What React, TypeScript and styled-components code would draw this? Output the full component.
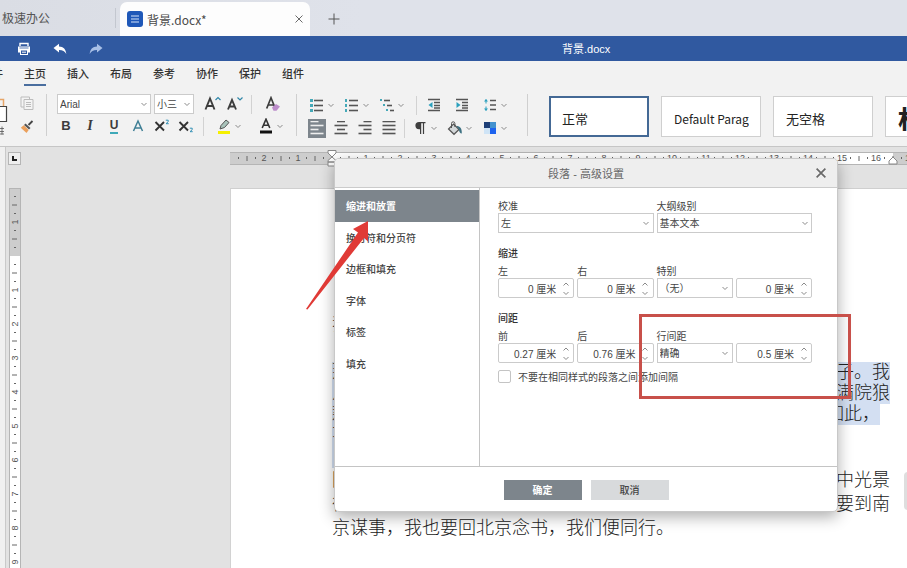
import React from "react";
import styled, { createGlobalStyle, css } from "styled-components";

const cjk = '"Noto Sans CJK SC", sans-serif';
const ui = '"Liberation Sans", "Noto Sans CJK SC", sans-serif';

const GlobalStyle = createGlobalStyle`
  *, *::before, *::after { box-sizing: border-box; }
  body { margin: 0; background: #e2e2e2; font-family: ${ui}; color: #333; }
  button, input, select { font: inherit; color: inherit; margin: 0; }
  p, h1, h2 { margin: 0; }
`;

const App_ = styled.div`
  position: relative;
  display: flex;
  flex-direction: column;
  height: 100vh;
  overflow: hidden;
`;

/* ---------- window tabs ---------- */

const WindowTabs = styled.header`
  display: flex;
  align-items: flex-end;
  flex: none;
  height: 36px;
  padding-left: 2px;
  background: linear-gradient(90deg, #dadde4, #dfe2ea 40%);
  font-family: ${cjk};
  font-size: 12px;
`;

const HomeTab = styled.button`
  width: 114px;
  height: 20px;
  margin-bottom: 8px;
  padding: 0;
  border: 0;
  border-right: 1px solid #c3c7cf;
  background: none;
  color: #555;
  text-align: left;
  line-height: 20px;
`;

const FileTab = styled.div`
  display: flex;
  align-items: center;
  width: 190px;
  height: 34px;
  margin-left: 4px;
  padding: 0 7px;
  gap: 4px;
  border-radius: 7px 7px 0 0;
  background: #fdfdfd;
  color: #4a4a4a;
`;

const FileName = styled.span`
  flex: 1;
`;

const PlainButton = styled.button`
  display: flex;
  align-items: center;
  justify-content: center;
  padding: 0;
  border: 0;
  background: none;
  color: #555;
`;

const NewTabButton = styled(PlainButton)`
  width: 48px;
  height: 34px;
`;

/* ---------- title bar ---------- */

const TitleBar = styled.div`
  display: grid;
  grid-template-columns: 562px 1fr;
  align-items: center;
  flex: none;
  height: 25px;
  background: #3059a0;
  color: #fff;
`;

const QuickActions = styled.div`
  display: flex;
  gap: 20px;
  padding-left: 16px;
`;

const QuickButton = styled(PlainButton)<{ $dim?: boolean }>`
  width: 16px;
  height: 16px;
  color: ${(p) => (p.$dim ? "#a9c0e6" : "#fff")};
`;

const DocTitle = styled.h1`
  font-family: "Liberation Sans", ${cjk};
  font-size: 11px;
  font-weight: 400;
  line-height: 24px;
`;

/* ---------- ribbon ---------- */

const RibbonTabs = styled.nav`
  display: flex;
  flex: none;
  gap: 21px;
  height: 27px;
  background: #f2f2f2;
`;

const RibbonTab = styled.button<{ $active?: boolean; $cut?: boolean }>`
  flex: none;
  height: 25px;
  padding: 0;
  border: 0;
  border-bottom: 2px solid ${(p) => (p.$active ? "#4a6e9f" : "transparent")};
  margin-left: ${(p) => (p.$cut ? "-19px" : "0")};
  background: none;
  color: #333;
  font-family: ${cjk};
  font-size: 11px;
  font-weight: 500;
  line-height: 24px;
`;

const Ribbon = styled.div`
  display: flex;
  flex: none;
  height: 59px;
  padding-top: 6px;
  border-bottom: 1px solid #c6c6c6;
  background: #f2f2f2;
`;

const Group = styled.div<{ $width: number; $pad: number }>`
  display: flex;
  flex-direction: column;
  flex: none;
  gap: 1px;
  width: ${(p) => p.$width}px;
  height: 45px;
  padding-left: ${(p) => p.$pad}px;
`;

const Divided = styled(Group)`
  height: 42px;
  border-right: 1px solid #cfcfcf;
`;

const ToolRow = styled.div<{ $gap?: number; $pad?: number }>`
  display: flex;
  align-items: center;
  height: 22px;
  gap: ${(p) => p.$gap ?? 0}px;
  padding-left: ${(p) => p.$pad ?? 0}px;
`;

const Tool = styled(PlainButton)<{ $w: number; $on?: boolean }>`
  flex: none;
  width: ${(p) => p.$w}px;
  height: 19px;
  color: #444;
  background: ${(p) => (p.$on ? "#7d858c" : "none")};
`;

const Glyph = styled.span<{ $bold?: boolean; $italic?: boolean; $color?: string; $size?: number }>`
  font-size: ${(p) => p.$size ?? 14}px;
  line-height: 16px;
  font-weight: ${(p) => (p.$bold ? 700 : 400)};
  color: ${(p) => p.$color ?? "#3c3c3c"};
  ${(p) => p.$italic && css`font-family: "Liberation Serif", serif; font-style: italic;`}
`;

const Underlined = styled(Glyph)`
  height: 15px;
  font-size: 12px;
  line-height: 13px;
  border-bottom: 2px solid #3fa9b8;
`;

const ToolSeparator = styled.span<{ $gap: number }>`
  flex: none;
  width: 1px;
  height: 19px;
  margin: 0 ${(p) => p.$gap}px;
  background: #d2d2d2;
`;

const SelectFrame = styled.span<{ $w?: number }>`
  display: grid;
  grid-template-columns: 1fr 13px;
  align-items: center;
  flex: none;
  width: ${(p) => (p.$w ? `${p.$w}px` : "auto")};
  height: 20px;
  border: 1px solid #cbcbcb;
  background: #fff;
  color: #444;
  svg { grid-area: 1 / 2; justify-self: center; pointer-events: none; }
`;

const Select = styled.select`
  grid-area: 1 / 1 / 2 / 3;
  appearance: none;
  width: 100%;
  height: 18px;
  padding: 1px 0 0 2px;
  border: 0;
  background: none;
  font-size: 10px;
  line-height: 17px;
`;

const FontControls = styled.span`
  display: flex;
  gap: 3px;
  padding: 0 8px 0 3px;
`;

const StyleGallery = styled.div`
  display: flex;
  flex: 1;
  gap: 12px;
  min-width: 0;
  padding: 2px 0 0 21px;
  overflow: hidden;
`;

const StyleCard = styled.button<{ $active?: boolean }>`
  flex: none;
  width: 100px;
  height: 41px;
  padding: 5px 11px 0 12px;
  border: 1px solid #cfcfcf;
  ${(p) => p.$active && css`border: 2px solid #446995; padding: 4px 10px 0 11px;`}
  background: #fff;
  color: #222;
  font-family: ${cjk};
  text-align: left;
`;

const StyleName = styled.span<{ $size: number; $bold?: boolean }>`
  display: block;
  overflow: hidden;
  white-space: nowrap;
  font-size: ${(p) => p.$size}px;
  font-weight: ${(p) => (p.$bold ? 700 : 400)};
  line-height: ${(p) => (p.$bold ? 24 : 32)}px;
`;

/* ---------- workspace ---------- */

const Workspace = styled.main`
  display: grid;
  grid-template-columns: 6px 24px 200px 1fr;
  grid-template-rows: 41px 1fr;
  flex: 1;
  min-height: 0;
  background: #e2e2e2;
`;

const SideStrip = styled.div`
  grid-row: 1 / 3;
  border-right: 1px solid #c9c9c9;
  background: #f0f0f0;
`;

const TabStopCell = styled.div`
  padding: 5px 0 0 2px;
`;

const TabStopButton = styled(PlainButton)`
  width: 13px;
  height: 13px;
  border: 1px solid #b5b5b5;
  background: #efefef;
`;

const HRulerCell = styled.div`
  grid-column: 4;
  padding-top: 3px;
  overflow: hidden;
`;

const VRulerCell = styled.div`
  grid-column: 2;
  grid-row: 2;
  padding-left: 3px;
  overflow: hidden;
`;

const Page = styled.article`
  grid-column: 4;
  grid-row: 2;
  min-width: 0;
  padding: 123px 0 0 101px;
  overflow: hidden;
  border-left: 1px solid #d2d2d2;
  border-top: 1px solid #cfcfcf;
  background: #fff;
  color: #222;
  font-family: "Liberation Serif", "Noto Sans CJK SC", serif;
  font-size: 18px;
  font-weight: 300;
  white-space: nowrap;
`;

const Paragraph = styled.p<{ $line: number; $after?: number }>`
  line-height: ${(p) => p.$line}px;
  margin-bottom: ${(p) => p.$after ?? 0}px;
`;

const Line = styled.span<{ $selected?: boolean }>`
  display: block;
  width: fit-content;
  background: ${(p) => (p.$selected ? "#d3dff2" : "none")};
`;

const EmptySelected = styled.div`
  width: 9px;
  height: 22px;
  background: #d3dff2;
`;

const ScrollKnob = styled.div`
  position: absolute;
  right: -9px;
  top: 472px;
  width: 12px;
  height: 38px;
  border-radius: 4px;
  background: #dedede;
`;

/* ---------- dialog ---------- */

const Dialog = styled.section`
  position: absolute;
  left: 334px;
  top: 158px;
  display: flex;
  flex-direction: column;
  width: 504px;
  height: 354px;
  border: 1px solid #c8c8c8;
  border-radius: 5px;
  background: #fff;
  box-shadow: 0 5px 15px rgba(0, 0, 0, 0.32);
  overflow: hidden;
  font-size: 10px;
  color: #444;
`;

const DialogHeader = styled.div`
  display: grid;
  grid-template-columns: 32px 1fr 32px;
  align-items: center;
  flex: none;
  height: 29px;
  border-bottom: 1px solid #cbcbcb;
  background: #eee;
`;

const DialogTitle = styled.h2`
  grid-column: 2;
  font-size: 11px;
  font-weight: 400;
  color: #666;
  text-align: center;
`;

const DialogBody = styled.div`
  display: flex;
  flex: 1;
  min-height: 0;
`;

const Categories = styled.div`
  display: grid;
  grid-template-rows: repeat(6, 1fr);
  width: 144px;
  height: 191px;
  padding-top: 2px;
`;

const CategoryPane = styled.div`
  flex: none;
  border-right: 1px solid #c4c4c4;
`;

const Category = styled.button<{ $active?: boolean }>`
  padding: 0 0 0 11px;
  border: 0;
  background: ${(p) => (p.$active ? "#7d858c" : "none")};
  color: ${(p) => (p.$active ? "#fff" : "#444")};
  font-family: ${cjk};
  font-size: 10px;
  font-weight: ${(p) => (p.$active ? 700 : 500)};
  text-align: left;
`;

const Form = styled.div`
  flex: 1;
  padding: 10px 25px 0 18px;
`;

const FieldGrid = styled.div`
  display: grid;
  grid-template-columns: repeat(4, 1fr);
  column-gap: 3px;
  align-items: end;
`;

const Field = styled.div<{ $wide?: boolean }>`
  display: flex;
  flex-direction: column;
  grid-column: ${(p) => (p.$wide ? "span 2" : "auto")};
  min-width: 0;
`;

const FieldLabel = styled.label`
  height: 15px;
  line-height: 17px;
`;

const SectionTitle = styled.h2`
  margin-top: 12px;
  height: 18px;
  font-size: 10px;
  font-weight: 500;
  line-height: 18px;
  color: #333;
`;

const SpinFrame = styled.span`
  display: flex;
  height: 20px;
  border: 1px solid #cbcbcb;
  border-radius: 2px;
  background: #fff;
`;

const SpinInput = styled.input`
  flex: 1;
  min-width: 0;
  padding: 0 2px 0 0;
  border: 0;
  background: none;
  text-align: right;
`;

const SpinButtons = styled.span`
  display: flex;
  flex-direction: column;
  width: 15px;
`;

const SpinButton = styled(PlainButton)`
  flex: 1;
`;

const CheckRow = styled.label`
  display: flex;
  align-items: center;
  gap: 7px;
  margin-top: 6px;
  height: 15px;
`;

const Checkbox = styled.input`
  appearance: none;
  width: 13px;
  height: 13px;
  border: 1px solid #c4c4c4;
  border-radius: 2px;
  background: #fff;
`;

const DialogFooter = styled.div`
  display: flex;
  justify-content: center;
  gap: 9px;
  flex: none;
  height: 45px;
  padding-top: 13px;
  border-top: 1px solid #c4c4c4;
`;

const ActionButton = styled.button<{ $primary?: boolean }>`
  width: 78px;
  height: 20px;
  padding: 0;
  border: 0;
  background: ${(p) => (p.$primary ? "#7d858c" : "#d8dadc")};
  color: ${(p) => (p.$primary ? "#fff" : "#444")};
  font-family: ${cjk};
  font-size: 10px;
  font-weight: ${(p) => (p.$primary ? 700 : 500)};
  line-height: 20px;
`;

/* ---------- annotations ---------- */

const HighlightBox = styled.div`
  position: absolute;
  left: 639px;
  top: 314px;
  width: 212px;
  height: 85px;
  border: 3px solid #c8504a;
  pointer-events: none;
`;

const Arrow = styled.svg`
  position: absolute;
  left: 304px;
  top: 219px;
  pointer-events: none;
`;

/* ---------- icons ---------- */

const Chevron = ({ flip = false, size = 6 }: { flip?: boolean; size?: number }) => (
  <svg width={size} height={size} viewBox="0 0 6 6" fill="none" stroke="#8a8a8a">
    <path d={flip ? "M0.5 4.5 3 2l2.500 2.500" : "M0.500 2 3 4.500 5.500 2"} />
  </svg>
);

const CloseIcon = ({ size = 8, weight = 1 }: { size?: number; weight?: number }) => (
  <svg width={size} height={size} viewBox="0 0 8 8" stroke="#6a6a6a" strokeWidth={weight}>
    <path d="M0.500 0.500l7 7M7.500 0.500l-7 7" />
  </svg>
);

const DocIcon = () => (
  <svg width="16" height="16" viewBox="0 0 16 16">
    <rect width="16" height="16" rx="3" fill="#1f58b8" />
    <path d="M4 5h8M4 8h8M4 11h8" stroke="#d5e3fa" strokeWidth="1.200" />
  </svg>
);

const PrintIcon = () => (
  <svg width="14" height="14" viewBox="0 0 14 14" fill="none">
    <path d="M3 4V1.500h8V4" stroke="#fff" strokeWidth="1.400" />
    <path d="M1 4.500h12v6h-2V8H3v2.500H1z" fill="#fff" />
    <rect x="3.500" y="8" width="7" height="4.500" stroke="#fff" />
    <path d="M5 10.200h4" stroke="#fff" />
    <path d="M2.500 6h9" stroke="#3059a0" strokeWidth="0.800" />
  </svg>
);

const UndoIcon = ({ redo = false }: { redo?: boolean }) => (
  <svg width="14" height="12" viewBox="0 0 14 12" fill="currentColor">
    <path
      transform={redo ? "matrix(-1 0 0 1 14 0)" : undefined}
      d="M0.500 5 6 0.800v2.700c4.500 0 7 3 7.300 7.500C11.800 8.200 9.800 6.900 6 6.900v2.600z"
    />
  </svg>
);

const ListIcon = ({ kind }: { kind: "bullet" | "number" | "multi" }) => {
  const rows = [3, 8, 13];
  return (
    <svg width="16" height="16" viewBox="0 0 16 16">
      {rows.map((y, i) => {
        const dx = kind === "multi" ? i * 3 : 0;
        const r = kind === "bullet" ? 3 : 2;
        return (
          <g key={y}>
            <rect x={1 + dx} y={y - 1} width={r} height={kind === "number" ? 3 : r} fill="#45a9b8" />
            <path d={`M${5 + dx} ${y + 0.5}H${kind === "multi" ? 11 + i * 2 : 14}`} stroke="#555" strokeWidth="1.600" />
          </g>
        );
      })}
    </svg>
  );
};

const IndentIcon = ({ out = false }: { out?: boolean }) => (
  <svg width="14" height="14" viewBox="0 0 14 14" fill="none">
    <path d="M1 1.500h12M7 4.500h6M7 7.500h6M7 10h6M1 12.500h12" stroke="#555" strokeWidth="1.300" />
    <path d={out ? "M5.500 4 1.500 7 5.500 10z" : "M1.500 4 5.500 7 1.500 10z"} fill="#2ba0bd" />
  </svg>
);

const SpacingIcon = () => (
  <svg width="14" height="14" viewBox="0 0 14 14" fill="none">
    <path d="M3 1.500v11" stroke="#2ba0bd" strokeDasharray="4 3" />
    <path d="M1 3.500 3 1l2 2.500M1 10.500 3 13l2-2.500" fill="#2ba0bd" />
    <path d="M7 2.500h6M7 7h6M7 11.500h6" stroke="#555" strokeWidth="1.600" />
  </svg>
);

const AlignIcon = ({ kind, color = "#555" }: { kind: "left" | "center" | "right" | "full"; color?: string }) => (
  <svg width="14" height="14" viewBox="0 0 14 14" stroke={color} strokeWidth="1.600">
    {[1, 5, 9, 13].map((y, i) => {
      const w = kind === "full" || i % 2 === 1 ? 13 : 8;
      const x = kind === "center" ? (14 - w) / 2 : kind === "right" ? 13.5 - w : 0.5;
      return <path key={y} d={`M${x} ${y - 0.5}h${w}`} />;
    })}
  </svg>
);

const PilcrowIcon = () => (
  <svg width="12" height="14" viewBox="0 0 12 14">
    <path d="M11.500 1H5a3.600 3.600 0 0 0 0 7.200h1V13h1.200V2.200h1.700V13h1.200V2.200h1.400z" fill="#3f3f3f" />
  </svg>
);

const BucketIcon = () => (
  <svg width="16" height="15" viewBox="0 0 16 15" fill="none">
    <path d="M6.500 3 12 8.500 7 13.300 1.500 8z" fill="#d4d8da" stroke="#555" strokeWidth="1.200" />
    <path d="M4.500 7V2.500a1.700 1.700 0 0 1 3.400 0V6" stroke="#555" />
    <path d="M9.500 5c3.500 0 5.500 2 5.300 7.500-1.800 0-2.800-2-2.800-4z" fill="#3d7182" />
  </svg>
);

const ThemeIcon = () => (
  <svg width="12" height="12" viewBox="0 0 12 12">
    <rect width="12" height="12" fill="#2b6fd0" />
    <rect width="6" height="6" fill="#1d3f77" />
    <rect y="6" width="6" height="6" fill="#cfe4f6" />
    <rect x="6" y="6" width="6" height="6" fill="#1d63ef" />
    <rect x="6" width="6" height="6" fill="#4392cf" />
  </svg>
);

const HighlighterIcon = () => (
  <svg width="14" height="15" viewBox="0 0 14 15">
    <path d="M3 10 4 6.500 9 1l3 2.500L7.500 8.500z" fill="#a9c3bb" stroke="#555" />
    <rect x="1" y="12" width="12" height="3" fill="#f5f000" />
  </svg>
);

const FontColorIcon = () => (
  <svg width="14" height="16" viewBox="0 0 14 16">
    <path d="M3.200 10 7 1.200 10.800 10M4.500 7.200h5" fill="none" stroke="#333" strokeWidth="1.600" />
    <rect x="1" y="12.500" width="12" height="3" fill="#111" />
  </svg>
);

const ClearStyleIcon = () => (
  <svg width="16" height="16" viewBox="0 0 16 16">
    <path d="M1.700 12.500 6 1.800l4.300 10.700M3.200 9h5.500" fill="none" stroke="#3c3c3c" strokeWidth="1.700" />
    <path d="M7 11.500 11 8l4 2.500-3.500 4.300-3 0z" fill="#bd8ecb" />
  </svg>
);

const FontSizeIcon = ({ down = false }: { down?: boolean }) => (
  <svg width="18" height="16" viewBox="0 0 18 16" fill="none">
    <path
      d={down ? "M2 13.500 6 4l4 9.500M3.500 10.500h5" : "M1.500 13.500 6 2.500l4.500 11M3 10h6"}
      stroke="#3c3c3c"
      strokeWidth="1.900"
    />
    <path d={down ? "M11.500 1.500 14 4l2.500-2.500" : "M11.500 4 14 1.500 16.500 4"} stroke="#2f86a8" strokeWidth="1.200" />
  </svg>
);

const TextEffectIcon = () => (
  <svg width="12" height="14" viewBox="0 0 12 14" fill="none">
    <path d="M1.500 12 6 2l4.500 10M3 9h6" stroke="#3f7f95" strokeWidth="1.500" />
  </svg>
);

const ScriptIcon = ({ sub = false }: { sub?: boolean }) => (
  <svg width="16" height="14" viewBox="0 0 16 14" fill="none">
    <path d="M1.500 3l8.500 8.500M10 3l-8.500 8.500" stroke="#333" strokeWidth="1.900" />
    <path
      transform={sub ? "translate(0 8)" : undefined}
      d="M11.800 1.200h2.400v1.500l-2.200 2h2.700"
      stroke="#3390b5"
    />
  </svg>
);

const ClipboardIcon = () => (
  <svg width="8" height="41" viewBox="0 0 8 41" fill="none">
    <path d="M0 4.500h3.500V14" stroke="#e7a567" strokeWidth="1.500" />
    <path d="M0 11.500h6.500v15H0" fill="#fff" stroke="#444" strokeWidth="1.200" />
    <path d="M0 33.500h4M2 31.500v8M0 36.500h4M0 39h4" stroke="#555" strokeWidth="0.800" />
  </svg>
);

const CopyIcon = () => (
  <svg width="14" height="14" viewBox="0 0 14 14" fill="#f4f4f4" stroke="#bcbcbc">
    <path d="M1 1h8.500v10H1z" />
    <path d="M4 3.500h9v10H4zM6 6.500h5M6 8.500h5M6 10.500h5" />
  </svg>
);

const BrushIcon = () => (
  <svg width="14" height="14" viewBox="0 0 14 14">
    <path d="M12.500 1 8.500 5" stroke="#444" strokeWidth="1.800" />
    <path d="M5.500 3.500 10.500 8l-1.500 1.500L4 5z" fill="#555" />
    <path d="M3.700 5.200 8.700 10 6.500 13 0.800 7.800z" fill="#eba05c" />
  </svg>
);

/* ---------- rulers ---------- */

const UNIT = 34;

const ticks = (origin: number, from: number, to: number) => {
  const out: { pos: number; kind: number; label: number }[] = [];
  for (let q = from; q <= to; q++) {
    out.push({ pos: origin + (q * UNIT) / 4, kind: Math.abs(q % 4), label: Math.abs(q / 4) });
  }
  return out.filter((t) => t.label !== 0);
};

const HorizontalRuler = () => (
  <svg width="100%" height="20" fontFamily="Liberation Sans, sans-serif" fontSize="9" fill="#555">
    <rect y="2" width="100%" height="12" fill="#cdcdcd" />
    <rect x="102" y="2" width="561" height="12" fill="#fff" />
    <path d="M0 2.500h2000M0 14.500h2000" stroke="#b5b5b5" />
    {ticks(102, -11, 78).map((t) =>
      t.kind === 0 ? (
        <text key={t.pos} x={t.pos} y="11" textAnchor="middle">{t.label}</text>
      ) : (
        <path key={t.pos} d={`M${t.pos} ${t.kind === 2 ? 6 : 7}v${t.kind === 2 ? 5 : 2}`} stroke="#666" />
      )
    )}
    <g fill="#fff" stroke="#888">
      <path d="M98 0.500h8v2.500l-4 4-4-4z" />
      <path d="M98 12v-1.500l4-3.500 4 3.500V12zM98 12h8v4h-8z" />
      <path d="M659 14v-3l4-4 4 4v3z" />
    </g>
  </svg>
);

const VerticalRuler = () => (
  <svg width="13" height="1000" fontFamily="Liberation Sans, sans-serif" fontSize="9" fill="#555">
    <rect width="12" height="68" fill="#cdcdcd" />
    <rect y="68" width="12" height="932" fill="#fff" />
    <path d="M0.500 0v1000M11.500 0v1000M0 0.500h12" stroke="#b5b5b5" fill="none" />
    {ticks(68, -7, 104).map((t) =>
      t.kind === 0 ? (
        <text key={t.pos} transform={`translate(9 ${t.pos}) rotate(-90)`} textAnchor="middle">{t.label}</text>
      ) : (
        <path key={t.pos} d={`M${t.kind === 2 ? 3 : 5} ${t.pos}h${t.kind === 2 ? 5 : 2}`} stroke="#666" />
      )
    )}
  </svg>
);

/* ---------- composite controls ---------- */

const IconSlot = styled.span`
  display: flex;
  justify-content: center;
  width: 18px;
`;

const ArrowSlot = styled.span`
  display: flex;
  justify-content: center;
  width: 10px;
`;

const ClipboardGrid = styled.div`
  display: flex;
  align-items: center;
  gap: 12px;
  height: 42px;
`;

const ClipboardColumn = styled.div`
  display: flex;
  flex-direction: column;
  gap: 5px;
`;

const DropTool = ({ label, children }: { label: string; children: React.ReactNode }) => (
  <Tool $w={28} aria-label={label}>
    <IconSlot>{children}</IconSlot>
    <ArrowSlot><Chevron /></ArrowSlot>
  </Tool>
);

const Dropdown = ({ id, value, label, width }: { id?: string; value: string; label?: string; width?: number }) => (
  <SelectFrame $w={width}>
    <Select id={id} aria-label={label} defaultValue={value}>
      <option>{value}</option>
    </Select>
    <Chevron />
  </SelectFrame>
);

const SelectField = ({ id, label, value, wide }: { id: string; label: string; value: string; wide?: boolean }) => (
  <Field $wide={wide}>
    <FieldLabel htmlFor={id}>{label}</FieldLabel>
    <Dropdown id={id} value={value} />
  </Field>
);

const SpinField = ({ id, label, value, name }: { id: string; label?: string; value: string; name?: string }) => (
  <Field>
    {label && <FieldLabel htmlFor={id}>{label}</FieldLabel>}
    <SpinFrame>
      <SpinInput id={id} aria-label={name} defaultValue={value} />
      <SpinButtons>
        <SpinButton aria-label="增加"><Chevron flip /></SpinButton>
        <SpinButton aria-label="减少"><Chevron /></SpinButton>
      </SpinButtons>
    </SpinFrame>
  </Field>
);

const categories = ["缩进和放置", "换行符和分页符", "边框和填充", "字体", "标签", "填充"];
const ribbonTabs = ["文件", "主页", "插入", "布局", "参考", "协作", "保护", "组件"];

const selectedLines = [
  "那年冬天，祖母死了，父亲的差使也交卸了，正是祸不单行的日子。我",
  "从北京到徐州，打算跟着父亲奔丧回家。到徐州见着父亲，看见满院狼",
  "藉的东西，又想起祖母，不禁簌簌地流下眼泪。父亲说：“事已如此，",
  "不必难过，好在天无绝人之路！”",
];

const closingLines = [
  "回家变卖典质，父亲还了亏空；又借钱办了丧事。这些日子，家中光景",
  "很是惨淡，一半为了丧事，一半为了父亲赋闲。丧事完毕，父亲要到南",
  "京谋事，我也要回北京念书，我们便同行。",
];

export default function App() {
  return (
    <App_>
      <GlobalStyle />
      <WindowTabs>
        <HomeTab>极速办公</HomeTab>
        <FileTab>
          <DocIcon />
          <FileName>背景.docx*</FileName>
          <PlainButton aria-label="关闭标签"><CloseIcon /></PlainButton>
        </FileTab>
        <NewTabButton aria-label="新建标签">
          <svg width="12" height="12" viewBox="0 0 12 12" stroke="#555"><path d="M6 0.500v11M0.500 6h11" /></svg>
        </NewTabButton>
      </WindowTabs>

      <TitleBar>
        <QuickActions>
          <QuickButton aria-label="打印"><PrintIcon /></QuickButton>
          <QuickButton aria-label="撤销"><UndoIcon /></QuickButton>
          <QuickButton aria-label="重做" $dim><UndoIcon redo /></QuickButton>
        </QuickActions>
        <DocTitle>背景.docx</DocTitle>
      </TitleBar>

      <RibbonTabs>
        {ribbonTabs.map((t, i) => (
          <RibbonTab key={t} $cut={i === 0} $active={i === 1}>{t}</RibbonTab>
        ))}
      </RibbonTabs>

      <Ribbon>
        <Divided $width={47} $pad={0}>
          <ClipboardGrid>
            <Tool $w={8} aria-label="粘贴"><ClipboardIcon /></Tool>
            <ClipboardColumn>
              <Tool $w={14} aria-label="复制"><CopyIcon /></Tool>
              <Tool $w={14} aria-label="格式刷"><BrushIcon /></Tool>
            </ClipboardColumn>
          </ClipboardGrid>
        </Divided>

        <Divided $width={250} $pad={7}>
          <ToolRow>
            <FontControls>
              <Dropdown label="字体" value="Arial" width={94} />
              <Dropdown label="字号" value="小三" width={40} />
            </FontControls>
            <Tool $w={22} aria-label="增大字号"><FontSizeIcon /></Tool>
            <Tool $w={22} aria-label="减小字号"><FontSizeIcon down /></Tool>
            <ToolSeparator $gap={5} />
            <Tool $w={32} aria-label="清除样式"><ClearStyleIcon /></Tool>
          </ToolRow>
          <ToolRow>
            <Tool $w={24}><Glyph $bold $size={13}>B</Glyph></Tool>
            <Tool $w={24}><Glyph $bold $italic>I</Glyph></Tool>
            <Tool $w={24}><Underlined $bold>U</Underlined></Tool>
            <Tool $w={24} aria-label="文字效果"><TextEffectIcon /></Tool>
            <Tool $w={24} aria-label="上标"><ScriptIcon /></Tool>
            <Tool $w={24} aria-label="下标"><ScriptIcon sub /></Tool>
            <ToolSeparator $gap={5} />
            <ToolRow $gap={14} $pad={6}>
              <DropTool label="突出显示颜色"><HighlighterIcon /></DropTool>
              <DropTool label="字体颜色"><FontColorIcon /></DropTool>
            </ToolRow>
          </ToolRow>
        </Divided>

        <Divided $width={231} $pad={11}>
          <ToolRow>
            <ToolRow $gap={7}>
              <DropTool label="项目符号"><ListIcon kind="bullet" /></DropTool>
              <DropTool label="编号"><ListIcon kind="number" /></DropTool>
              <DropTool label="多级列表"><ListIcon kind="multi" /></DropTool>
            </ToolRow>
            <ToolSeparator $gap={10} />
            <Tool $w={14} aria-label="减少缩进"><IndentIcon out /></Tool>
            <ToolRow $gap={12} $pad={14}>
              <Tool $w={14} aria-label="增加缩进"><IndentIcon /></Tool>
              <DropTool label="行间距"><SpacingIcon /></DropTool>
            </ToolRow>
          </ToolRow>
          <ToolRow>
            <ToolRow $gap={6}>
              <Tool $w={18} $on aria-label="左对齐"><AlignIcon kind="left" color="#eee" /></Tool>
              <Tool $w={18} aria-label="居中"><AlignIcon kind="center" /></Tool>
              <Tool $w={18} aria-label="右对齐"><AlignIcon kind="right" /></Tool>
              <Tool $w={18} aria-label="两端对齐"><AlignIcon kind="full" /></Tool>
            </ToolRow>
            <ToolSeparator $gap={6} />
            <ToolRow $gap={7}>
              <DropTool label="非打印字符"><PilcrowIcon /></DropTool>
              <DropTool label="段落底色"><BucketIcon /></DropTool>
              <DropTool label="配色方案"><ThemeIcon /></DropTool>
            </ToolRow>
          </ToolRow>
        </Divided>

        <StyleGallery>
          <StyleCard $active><StyleName $size={13}>正常</StyleName></StyleCard>
          <StyleCard><StyleName $size={12}>Default Paragraph</StyleName></StyleCard>
          <StyleCard><StyleName $size={13}>无空格</StyleName></StyleCard>
          <StyleCard><StyleName $size={28} $bold>标题</StyleName></StyleCard>
        </StyleGallery>
      </Ribbon>

      <Workspace>
        <SideStrip />
        <TabStopCell>
          <TabStopButton aria-label="制表位">
            <svg width="7" height="7" viewBox="0 0 7 7"><path d="M2 1v4h4" fill="none" stroke="#222" strokeWidth="2" /></svg>
          </TabStopButton>
        </TabStopCell>
        <HRulerCell><HorizontalRuler /></HRulerCell>
        <VRulerCell><VerticalRuler /></VRulerCell>
        <Page>
          <Paragraph $line={24} $after={26}>我与父亲不相见已二年余了，我最不能忘记的是他的背影。</Paragraph>
          <Paragraph $line={21}>
            {selectedLines.map((l) => <Line key={l} $selected>{l}</Line>)}
          </Paragraph>
          <EmptySelected />
          <Paragraph $line={24}>
            {closingLines.map((l) => <Line key={l}>{l}</Line>)}
          </Paragraph>
        </Page>
      </Workspace>
      <ScrollKnob />

      <Dialog role="dialog" aria-labelledby="dialog-title">
        <DialogHeader>
          <DialogTitle id="dialog-title">段落 - 高级设置</DialogTitle>
          <PlainButton aria-label="关闭"><CloseIcon size={10} weight={1.4} /></PlainButton>
        </DialogHeader>
        <DialogBody>
          <CategoryPane>
            <Categories>
              {categories.map((c, i) => <Category key={c} $active={i === 0}>{c}</Category>)}
            </Categories>
          </CategoryPane>
          <Form>
            <FieldGrid>
              <SelectField id="align" label="校准" value="左" wide />
              <SelectField id="outline" label="大纲级别" value="基本文本" wide />
            </FieldGrid>
            <SectionTitle>缩进</SectionTitle>
            <FieldGrid>
              <SpinField id="indent-left" label="左" value="0 厘米" />
              <SpinField id="indent-right" label="右" value="0 厘米" />
              <SelectField id="special" label="特别" value="（无）" />
              <SpinField id="special-value" name="特别值" value="0 厘米" />
            </FieldGrid>
            <SectionTitle>间距</SectionTitle>
            <FieldGrid>
              <SpinField id="before" label="前" value="0.27 厘米" />
              <SpinField id="after" label="后" value="0.76 厘米" />
              <SelectField id="line" label="行间距" value="精确" />
              <SpinField id="line-value" name="行间距值" value="0.5 厘米" />
            </FieldGrid>
            <CheckRow>
              <Checkbox type="checkbox" />
              不要在相同样式的段落之间添加间隔
            </CheckRow>
          </Form>
        </DialogBody>
        <DialogFooter>
          <ActionButton $primary>确定</ActionButton>
          <ActionButton>取消</ActionButton>
        </DialogFooter>
      </Dialog>

      <HighlightBox />
      <Arrow width="68" height="94" viewBox="304 219 68 94">
        <path d="M368 221 353 229l5 3.500L306 309l1.500 0.500L364 238l4 3.500z" fill="#e03a36" />
      </Arrow>
    </App_>
  );
}
